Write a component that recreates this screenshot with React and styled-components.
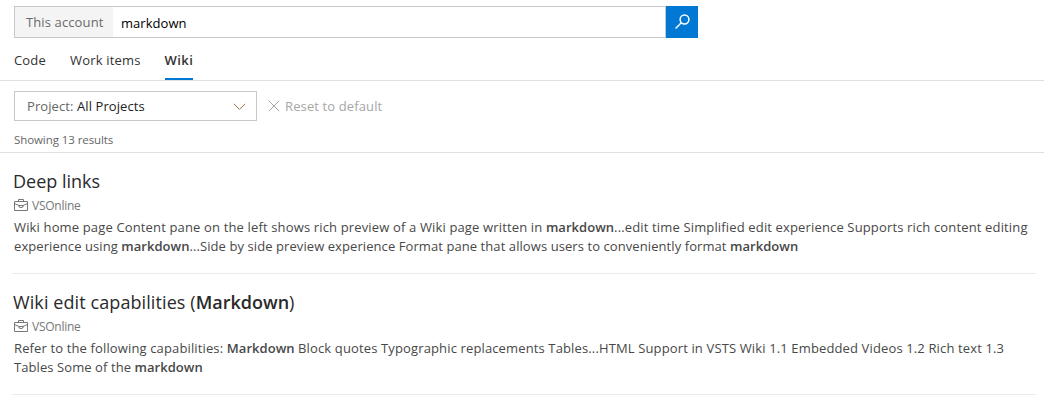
import React from "react";
import styled, { createGlobalStyle, css } from "styled-components";

const Global = createGlobalStyle`
  * { box-sizing: border-box; }
  body {
    margin: 0;
    background: #fff;
    color: #333;
    font-family: "Open Sans", "Noto Sans", sans-serif;
    font-size: 13px;
    overflow: hidden;
  }
`;

const Page = styled.main`
  width: 1044px;
  height: 402px;
  padding-top: 6px;
  overflow: hidden;
`;

const SearchBar = styled.form`
  display: flex;
  width: 684px;
  height: 32px;
  margin-left: 14px;
`;

const SearchField = styled.div`
  display: flex;
  flex: 1;
  border: 1px solid #c8c8c8;
`;

const Scope = styled.span`
  width: 98px;
  padding-left: 11px;
  background: #f4f4f4;
  color: #6a6a6a;
  letter-spacing: 0.12px;
  line-height: 30px;
  white-space: nowrap;
`;

const Query = styled.span`
  padding-left: 8px;
  color: #000;
  letter-spacing: 0.04px;
  line-height: 32px;
`;

const SearchButton = styled.button`
  width: 32px;
  height: 32px;
  padding: 0;
  border: 0;
  background: #0078d4;
`;

const Icon = styled.svg`
  display: block;
  flex: none;
  fill: none;
  stroke: currentColor;
`;

const Tabs = styled.nav`
  display: flex;
  gap: 24px;
  height: 43px;
  padding-left: 14px;
  border-bottom: 1px solid #e0e0e0;
`;

const Tab = styled.a`
  height: 42px;
  padding-top: 7px;
  letter-spacing: 0.18px;
  line-height: 30px;
  white-space: nowrap;
  ${({ $active }) => $active && css`
    border-bottom: 2px solid #0078d4;
    font-weight: 600;
    letter-spacing: 0.4px;
  `}
`;

const Filters = styled.div`
  display: flex;
  height: 40px;
  padding: 10px 0 0 14px;
`;

const Dropdown = styled.div`
  display: flex;
  align-items: center;
  justify-content: space-between;
  width: 243px;
  height: 30px;
  padding: 0 10px 0 12px;
  border: 1px solid #c8c8c8;
  color: #222;
  letter-spacing: 0.09px;
`;

const Muted = styled.span`
  color: #666;
`;

const Reset = styled.div`
  display: flex;
  align-items: center;
  gap: 5px;
  height: 30px;
  margin-left: 11px;
  color: #a6a6a6;
  letter-spacing: 0.12px;
`;

const Summary = styled.div`
  height: 32px;
  padding-left: 14px;
  border-bottom: 1px solid #e0e0e0;
  color: #666;
  font-size: 11.5px;
  letter-spacing: -0.08px;
  line-height: 38px;
`;

const Result = styled.article`
  height: 121px;
  margin: 0 8px 0 12px;
  padding: 16px 0 0 2px;
  border-bottom: 1px solid #eaeaea;
`;

const Title = styled.h2`
  height: 25px;
  margin: 0 0 0 -1px;
  color: #2a2a2a;
  font-size: 18px;
  font-weight: 400;
  letter-spacing: ${({ $track }) => $track || 0}px;
  line-height: 25px;
  b { font-weight: 600; letter-spacing: 0; }
`;

const Source = styled.div`
  display: flex;
  align-items: center;
  gap: 4px;
  height: 22px;
  margin-bottom: 2px;
  color: #777;
  font-size: 12px;
  letter-spacing: -0.25px;
`;

const Line = styled.p`
  margin: 0;
  width: max-content;
  color: #484848;
  line-height: 19px;
  white-space: nowrap;
  letter-spacing: ${({ $track }) => $track || 0}px;
  b { font-weight: 600; letter-spacing: 0.04px; }
`;

const Briefcase = () => (
  <Icon width="14" height="12" viewBox="0 0 14 12">
    <path d="M.5 2.500h13v9H.5zM4.500 2.500v-2h5v2M.5 4.500l4.500 2h4l4.500-2M5 6.500v1.500q2 1 4 0V6.500" />
  </Icon>
);

export default function App() {
  return (
    <Page>
      <Global />
      <SearchBar>
        <SearchField>
          <Scope>This account</Scope>
          <Query>markdown</Query>
        </SearchField>
        <SearchButton type="button" aria-label="Search">
          <Icon width="32" height="32" viewBox="0 0 32 32" color="#fff" strokeWidth="1.5">
            <circle cx="18.5" cy="13.5" r="4.4" />
            <path d="M15.300 16.800L9.600 22.500" />
          </Icon>
        </SearchButton>
      </SearchBar>
      <Tabs>
        <Tab>Code</Tab>
        <Tab>Work items</Tab>
        <Tab $active>Wiki</Tab>
      </Tabs>
      <Filters>
        <Dropdown>
          <span><Muted>Project:</Muted> All Projects</span>
          <Icon width="13" height="8" viewBox="0 0 13 8" color="#a0703e">
            <path d="M.8 1.900l5.700 5.400L12.200 1.900" />
          </Icon>
        </Dropdown>
        <Reset>
          <Icon width="12" height="12" viewBox="0 0 12 12">
            <path d="M.8.8l10.400 10.400M11.200.8L.8 11.200" />
          </Icon>
          <span>Reset to default</span>
        </Reset>
      </Filters>
      <Summary>Showing 13 results</Summary>
      <Result>
        <Title>Deep links</Title>
        <Source><Briefcase />VSOnline</Source>
        <Line $track={0.148}>Wiki home page Content pane on the left shows rich preview of a Wiki page written in <b>markdown</b>...edit time Simplified edit experience Supports rich content editing</Line>
        <Line $track={0.078}>experience using <b>markdown</b>...Side by side preview experience Format pane that allows users to conveniently format <b>markdown</b></Line>
      </Result>
      <Result>
        <Title $track={0.09}>Wiki edit capabilities (<b>Markdown</b>)</Title>
        <Source><Briefcase />VSOnline</Source>
        <Line $track={0.135}>Refer to the following capabilities: <b>Markdown</b> Block quotes Typographic replacements Tables...HTML Support in VSTS Wiki 1.1 Embedded Videos 1.2 Rich text 1.3</Line>
        <Line $track={0.08}>Tables Some of the <b>markdown</b></Line>
      </Result>
    </Page>
  );
}
